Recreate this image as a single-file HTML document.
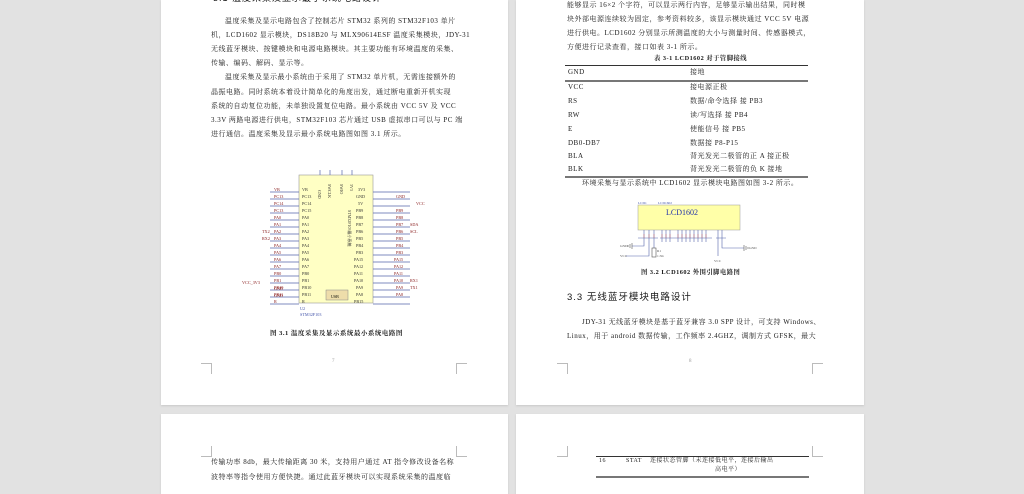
<!DOCTYPE html>
<html><head><meta charset="utf-8"><style>
body{margin:0;width:1024px;height:483px;background:#e2e2e2;position:relative;overflow:hidden;font-family:"Liberation Serif","Noto Serif CJK SC",serif;color:#1a1a1a}
.pg{position:absolute;background:#fff;box-shadow:0 1px 2px #c8c8c8}
.t{position:absolute;font-size:7px;white-space:nowrap;line-height:9px;letter-spacing:0.5px}
.m{position:absolute;border-color:#bbb;border-style:solid;width:10px;height:10px}
.h{position:absolute;height:0;border-top:1px solid #333}
svg text{font-family:"Liberation Serif",serif}
</style></head><body>
<div class="pg" style="left:161px;top:0;width:347px;height:405px"></div>
<div class="pg" style="left:516px;top:0;width:348px;height:405px"></div>
<div class="pg" style="left:161px;top:414px;width:347px;height:80px"></div>
<div class="pg" style="left:516px;top:414px;width:348px;height:80px"></div>

<div class="t" style="left:213px;top:-6px;font-size:9px;line-height:9px;font-family:'Liberation Sans','Noto Sans CJK SC',sans-serif;letter-spacing:1px">3.1 温度采集及显示最小系统电路设计</div>
<div class="t" style="left:225px;top:17px">温度采集及显示电路包含了控制芯片 STM32 系列的 STM32F103 单片</div>
<div class="t" style="left:211px;top:31px">机，LCD1602 显示模块，DS18B20 与 MLX90614ESF 温度采集模块，JDY-31</div>
<div class="t" style="left:211px;top:45px">无线蓝牙模块、按键模块和电源电路模块。其主要功能有环境温度的采集、</div>
<div class="t" style="left:211px;top:59px">传输、编码、解码、显示等。</div>
<div class="t" style="left:225px;top:73px">温度采集及显示最小系统由于采用了 STM32 单片机，无需连接额外的</div>
<div class="t" style="left:211px;top:88px">晶振电路。同时系统本着设计简单化的角度出发，通过断电重新开机实现</div>
<div class="t" style="left:211px;top:102px">系统的自动复位功能，未单独设置复位电路。最小系统由 VCC 5V 及 VCC</div>
<div class="t" style="left:211px;top:116px">3.3V 两路电源进行供电，STM32F103 芯片通过 USB 虚拟串口可以与 PC 端</div>
<div class="t" style="left:211px;top:130px">进行通信。温度采集及显示最小系统电路图如图 3.1 所示。</div>

<svg style="position:absolute;left:230px;top:170px" width="200" height="150" viewBox="0 0 200 150">
<rect x="69" y="5" width="74" height="128" fill="#ffffc4" stroke="#999" stroke-width="0.6"/>
<rect x="96" y="120" width="22" height="10" fill="#eeddaa" stroke="#888" stroke-width="0.5"/>
<text x="101" y="128" font-size="4">USB</text>
<g stroke="#5566aa" stroke-width="0.7">
<line x1="90" y1="0" x2="90" y2="5"/><line x1="100" y1="0" x2="100" y2="5"/><line x1="112" y1="0" x2="112" y2="5"/><line x1="122" y1="0" x2="122" y2="5"/>
</g>
<g fill="#333" font-size="4"><text x="88" y="20" transform="rotate(90 88 20)">GND</text><text x="98" y="14" transform="rotate(90 98 14)">SWCLK</text><text x="110" y="14" transform="rotate(90 110 14)">SWIO</text><text x="120" y="14" transform="rotate(90 120 14)">3V3</text>
<text x="118" y="40" transform="rotate(90 118 40)">STM32F103最小系统</text></g>
<g stroke="#5566aa" stroke-width="0.7" fill="none">
<path d="M40 22H69M40 29H69M40 36H69M40 43H69M40 50H69M40 57H69M40 64H69M40 71H69M40 78H69M40 85H69M40 92H69M40 99H69M40 106H69M40 113H69M40 120H69M40 127H69M40 134H69 M143 22H180M143 29H180M143 36H180M143 43H180M143 50H180M143 57H180M143 64H180M143 71H180M143 78H180M143 85H180M143 92H180M143 99H180M143 106H180M143 113H180M143 120H180M143 127H180M143 134H180"/>
</g>
<g fill="#333" font-size="4.2">
<text x="72" y="21">VB</text><text x="72" y="28">PC13</text><text x="72" y="35">PC14</text><text x="72" y="42">PC15</text><text x="72" y="49">PA0</text><text x="72" y="56">PA1</text><text x="72" y="63">PA2</text><text x="72" y="70">PA3</text><text x="72" y="77">PA4</text><text x="72" y="84">PA5</text><text x="72" y="91">PA6</text><text x="72" y="98">PA7</text><text x="72" y="105">PB0</text><text x="72" y="112">PB1</text><text x="72" y="119">PB10</text><text x="72" y="126">PB11</text><text x="72" y="133">R</text>
<text x="128" y="21">3V3</text><text x="126" y="28">GND</text><text x="128" y="35">5V</text><text x="126" y="42">PB9</text><text x="126" y="49">PB8</text><text x="126" y="56">PB7</text><text x="126" y="63">PB6</text><text x="126" y="70">PB5</text><text x="126" y="77">PB4</text><text x="126" y="84">PB3</text><text x="124" y="91">PA15</text><text x="124" y="98">PA12</text><text x="124" y="105">PA11</text><text x="124" y="112">PA10</text><text x="126" y="119">PA9</text><text x="126" y="126">PA8</text><text x="124" y="133">PB15</text>
</g>
<g fill="#8b2020" font-size="4.2">
<text x="44" y="21">VB</text><text x="44" y="28">PC13</text><text x="44" y="35">PC14</text><text x="44" y="42">PC13</text><text x="44" y="49">PA0</text><text x="44" y="56">PA1</text><text x="44" y="63">PA2</text><text x="32" y="63">TX2</text><text x="32" y="70">RX2</text><text x="44" y="70">PA3</text><text x="44" y="77">PA4</text><text x="44" y="84">PA5</text><text x="44" y="91">PA6</text><text x="44" y="98">PA7</text><text x="44" y="105">PB0</text><text x="44" y="112">PB1</text><text x="44" y="119">PB10</text><text x="44" y="126">PB11</text><text x="44" y="133">R</text>
<text x="12" y="114">VCC_3V3</text><text x="44" y="120">GND</text><text x="44" y="127">GND</text>
<text x="166" y="28">GND</text><text x="186" y="35">VCC</text><text x="166" y="42">PB9</text><text x="166" y="49">PB8</text><text x="166" y="56">PB7</text><text x="180" y="56">SDA</text><text x="166" y="63">PB6</text><text x="180" y="63">SCL</text><text x="166" y="70">PB5</text><text x="166" y="77">PB4</text><text x="166" y="84">PB3</text><text x="164" y="91">PA15</text><text x="164" y="98">PA12</text><text x="164" y="105">PA11</text><text x="164" y="112">PA10</text><text x="180" y="112">RX1</text><text x="166" y="119">PA9</text><text x="180" y="119">TX1</text><text x="166" y="126">PA8</text>
</g>
<g fill="#4455aa" font-size="4.2"><text x="70" y="140">U2</text><text x="70" y="146">STM32F103</text></g>
</svg>
<div class="t" style="left:270px;top:329px;font-weight:bold;font-size:6.5px">图 3.1 温度采集及显示系统最小系统电路图</div>
<div class="m" style="left:201px;top:363px;border-width:1px 1px 0 0"></div>
<div class="m" style="left:456px;top:363px;border-width:1px 0 0 1px"></div>
<div class="t" style="left:332px;top:357px;font-size:5px;color:#999">7</div>

<div class="t" style="left:567px;top:1px">能够显示 16×2 个字符，可以显示两行内容，足够显示输出结果，同时模</div>
<div class="t" style="left:567px;top:15px">块外部电源连续较为固定，参考资料较多，该显示模块通过 VCC 5V 电源</div>
<div class="t" style="left:567px;top:29px">进行供电。LCD1602 分别显示所测温度的大小与测量时间、传感器模式，</div>
<div class="t" style="left:567px;top:43px">方便进行记录查看，接口如表 3-1 所示。</div>
<div class="t" style="left:654px;top:54px;font-weight:bold;font-size:6.3px">表 3-1 LCD1602 对于管脚接线</div>
<div class="h" style="left:565px;top:65px;width:243px;border-top-width:1.3px"></div>
<div class="h" style="left:565px;top:80px;width:243px;border-top:2px solid #777"></div>
<div class="h" style="left:565px;top:176px;width:243px;border-top:2px solid #777"></div>
<div class="t" style="left:568px;top:68px">GND</div><div class="t" style="left:690px;top:68px">接地</div>
<div class="t" style="left:568px;top:83px">VCC</div><div class="t" style="left:690px;top:83px">接电源正极</div>
<div class="t" style="left:568px;top:97px">RS</div><div class="t" style="left:690px;top:97px">数据/命令选择 接 PB3</div>
<div class="t" style="left:568px;top:111px">RW</div><div class="t" style="left:690px;top:111px">读/写选择 接 PB4</div>
<div class="t" style="left:568px;top:125px">E</div><div class="t" style="left:690px;top:125px">使能信号 接 PB5</div>
<div class="t" style="left:568px;top:139px">DB0-DB7</div><div class="t" style="left:690px;top:139px">数据接 P8-P15</div>
<div class="t" style="left:568px;top:152px">BLA</div><div class="t" style="left:690px;top:152px">背光发光二极管的正 A 接正极</div>
<div class="t" style="left:568px;top:165px">BLK</div><div class="t" style="left:690px;top:165px">背光发光二极管的负 K 接地</div>
<div class="t" style="left:582px;top:179px">环境采集与显示系统中 LCD1602 显示模块电路图如图 3-2 所示。</div>

<svg style="position:absolute;left:618px;top:198px" width="140" height="66" viewBox="0 0 140 66">
<text x="20" y="6" font-size="3.5" fill="#4455aa">LCD1</text><text x="40" y="6" font-size="3.5" fill="#4455aa">LCD1602</text>
<rect x="20" y="7" width="102" height="25" fill="#ffffa8" stroke="#999" stroke-width="0.5"/>
<text x="48" y="17" font-size="8" fill="#2233aa" font-family="Liberation Sans">LCD1602</text>
<g stroke="#5566aa" stroke-width="0.6" fill="none">
<path d="M26 32V44M31 32V44M36 32V44M44 32V44M48 32V44M52 32V44M60 32V44M64 32V44M68 32V44M72 32V44M76 32V44M80 32V44M84 32V44M88 32V44M100 32V44M104 32V44"/>
<path d="M20 40H40M42 40H94M98 40H108"/>
<path d="M26 44V48H14M31 44V58H8M36 44V50M100 44V58M104 44V50H126"/>
</g>
<g stroke="#cc6666" stroke-width="0.5" fill="none"><path d="M26 36V40M31 36V40M36 36V40M44 36V40M48 36V40M52 36V40M60 36V40M64 36V40M68 36V40M72 36V40M76 36V40M80 36V40M84 36V40M88 36V40"/></g>
<g stroke="#555" stroke-width="0.6" fill="none"><path d="M14 45V51M12 46V50M10 47V49M126 47V53M128 48V52M130 49V51"/></g>
<rect x="34" y="50" width="4" height="9" fill="#fff" stroke="#555" stroke-width="0.6"/>
<g font-size="3.5" fill="#555"><text x="2" y="49">GND</text><text x="2" y="59">VCC</text><text x="39" y="54">R1</text><text x="39" y="59">1.5K</text><text x="96" y="64">VCC</text><text x="131" y="51">GND</text></g>
</svg>
<div class="t" style="left:641px;top:268px;font-weight:bold;font-size:6.3px">图 3.2 LCD1602 外围引脚电路图</div>
<div class="t" style="left:567px;top:292px;font-size:9.5px;line-height:12px;font-family:'Liberation Sans','Noto Sans CJK SC',sans-serif;letter-spacing:1px">3.3 无线蓝牙模块电路设计</div>
<div class="t" style="left:582px;top:318px">JDY-31 无线蓝牙模块是基于蓝牙兼容 3.0 SPP 设计，可支持 Windows、</div>
<div class="t" style="left:567px;top:332px">Linux，用于 android 数据传输，工作频率 2.4GHZ，调制方式 GFSK，最大</div>
<div class="m" style="left:557px;top:363px;border-width:1px 1px 0 0"></div>
<div class="m" style="left:812px;top:363px;border-width:1px 0 0 1px"></div>
<div class="t" style="left:689px;top:357px;font-size:5px;color:#999">8</div>

<div class="m" style="left:201px;top:446px;border-width:0 1px 1px 0"></div>
<div class="m" style="left:456px;top:446px;border-width:0 0 1px 1px"></div>
<div class="t" style="left:211px;top:458px">传输功率 8db，最大传输距离 30 米，支持用户通过 AT 指令修改设备名称</div>
<div class="t" style="left:211px;top:473px">波特率等指令使用方便快捷。通过此蓝牙模块可以实现系统采集的温度临</div>
<div class="m" style="left:557px;top:446px;border-width:0 1px 1px 0"></div>
<div class="m" style="left:812px;top:446px;border-width:0 0 1px 1px"></div>
<div class="h" style="left:596px;top:456px;width:213px;border-top-width:1.3px"></div>
<div class="t" style="left:599px;top:457px;font-size:6px">16</div>
<div class="t" style="left:626px;top:457px;font-size:6px">STAT</div>
<div class="t" style="left:650px;top:457px;font-size:6px">连接状态管脚（未连接低电平，连接后输出</div>
<div class="t" style="left:715px;top:466px;font-size:6px">高电平）</div>
<div class="h" style="left:596px;top:476px;width:213px;border-top:2px solid #777"></div>
</body></html>
